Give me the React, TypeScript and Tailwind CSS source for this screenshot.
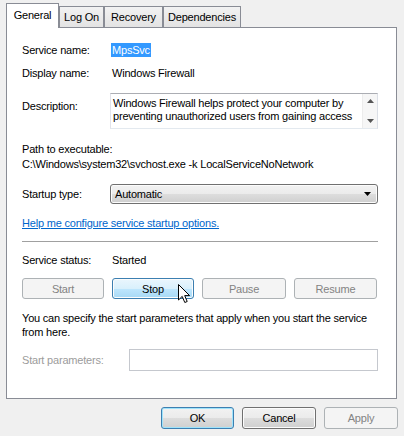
import React from 'react';

type BtnKind = 'normal' | 'disabled' | 'hover' | 'default';

const btnStyles: Record<BtnKind, string> = {
  normal:
    'border-[#707070] bg-[linear-gradient(#f2f2f2_0%,#ebebeb_50%,#dddddd_51%,#cfcfcf_100%)] text-black shadow-[inset_0_0_0_1px_#fcfcfc]',
  disabled: 'border-[#adb2b5] bg-[#f4f4f4] text-[#838383]',
  hover:
    'border-[#3c7fb1] bg-[linear-gradient(#eaf6fd_0%,#d9f0fc_50%,#bee6fd_51%,#a7d9f5_100%)] text-black shadow-[inset_0_0_0_1px_#fcfcfc]',
  default:
    'border-[#3c7fb1] bg-[linear-gradient(#f2f2f2_0%,#ebebeb_50%,#dddddd_51%,#cfcfcf_100%)] text-black shadow-[inset_0_0_0_1px_#9fe3fb]',
};

const WinButton = ({ label, kind = 'normal', className = '' }: { label: string; kind?: BtnKind; className?: string }) => (
  <div className={`flex items-center justify-center border rounded-[3px] ${btnStyles[kind]} ${className}`}>
    {label}
  </div>
);

const Tab = ({ label, active, className }: { label: string; active?: boolean; className: string }) => (
  <div
    className={
      active
        ? `h-[25px] -mb-px z-10 bg-white border border-b-0 border-[#898c95] flex items-center justify-center pb-[3px] ${className}`
        : `h-[21px] bg-[linear-gradient(#f2f2f2,#e3e3e3)] border border-b-0 border-[#898c95] flex items-center justify-center ${className}`
    }
  >
    {label}
  </div>
);

// Arrow pointer sitting over the Stop button
const Cursor = () => (
  <svg width="13" height="20" viewBox="0 0 13 20" className="absolute left-[178px] top-[284px]">
    <path d="M0.5 0.5 L0.5 16 L4.2 12.4 L6.8 18.5 L9.2 17.5 L6.7 11.6 L11.6 11.6 Z" fill="#fff" stroke="#000" strokeWidth="1" strokeLinejoin="round" />
  </svg>
);

export default function App() {
  return (
    <div className="relative w-[404px] h-[436px] bg-[#f0f0f0] font-['Liberation_Sans',Arial,sans-serif] text-[11px] tracking-[-0.2px] text-black leading-[14px] overflow-hidden">
      {/* Tabs */}
      <div className="flex items-end pl-[6px] pt-[3px]">
        <Tab label="General" active className="w-[53px]" />
        <Tab label="Log On" className="w-[45px]" />
        <Tab label="Recovery" className="w-[59px]" />
        <Tab label="Dependencies" className="w-[78px]" />
      </div>

      {/* Tab page */}
      <div className="ml-[6px] w-[391px] h-[372px] border border-[#898c95] bg-white pl-[15px] pr-[18px]">
        <div className="flex h-[14px] mt-[15px] items-center">
          <div className="w-[89px]">Service name:</div>
          <span className="bg-[#3399ff] text-white px-[1px] h-[14px]">MpsSvc</span>
        </div>

        <div className="flex h-[14px] mt-[9px] items-center">
          <div className="w-[90px]">Display name:</div>
          <span>Windows Firewall</span>
        </div>

        <div className="flex mt-[13px]">
          <div className="w-[88px] pt-[6px]">Description:</div>
          <div className="flex-1 h-[36px] border border-[#abadb3] border-l-[#e2e3ea] border-r-[#dbdfe6] border-b-[#e3e9ef] flex">
            <div className="flex-1 pl-[2px] pt-[3px] leading-[13px] overflow-hidden whitespace-nowrap">
              Windows Firewall helps protect your computer by
              <br />
              preventing unauthorized users from gaining access
            </div>
            <div className="w-[15px] bg-[#f6f6f6] border-l border-[#ececec] flex flex-col items-center justify-between py-[5px]">
              <svg width="7" height="4" viewBox="0 0 7 4">
                <path d="M0 4 L3.5 0 L7 4 Z" fill="#555" />
              </svg>
              <svg width="7" height="4" viewBox="0 0 7 4">
                <path d="M0 0 L7 0 L3.5 4 Z" fill="#555" />
              </svg>
            </div>
          </div>
        </div>

        <div className="h-[14px] mt-[13px]">Path to executable:</div>
        <div className="h-[14px] mt-[1px] whitespace-nowrap">C:\Windows\system32\svchost.exe -k LocalServiceNoNetwork</div>

        <div className="flex items-center mt-[13px]">
          <div className="w-[88px]">Startup type:</div>
          <div className="flex-1 h-[20px] border border-[#707070] rounded-[3px] bg-[linear-gradient(#f2f2f2_0%,#ebebeb_50%,#dddddd_51%,#cfcfcf_100%)] shadow-[inset_0_0_0_1px_#fcfcfc] flex items-center pl-[4px] pr-[6px]">
            <span className="flex-1">Automatic</span>
            <svg width="7" height="4" viewBox="0 0 7 4">
              <path d="M0 0 L7 0 L3.5 4 Z" fill="#000" />
            </svg>
          </div>
        </div>

        <div className="h-[14px] mt-[12px] text-[#0066cc] underline">Help me configure service startup options.</div>

        <div className="mt-[11px] border-t border-[#a0a0a0]" />

        <div className="flex h-[14px] mt-[11px] items-center">
          <div className="w-[90px]">Service status:</div>
          <span>Started</span>
        </div>

        <div className="grid grid-cols-[82px_82px_84px_83px] gap-[8px] mt-[11px] h-[21px]">
          <WinButton label="Start" kind="disabled" />
          <WinButton label="Stop" kind="hover" />
          <WinButton label="Pause" kind="disabled" />
          <WinButton label="Resume" kind="disabled" />
        </div>

        <div className="mt-[12px] whitespace-nowrap">
          You can specify the start parameters that apply when you start the service
          <br />
          from here.
        </div>

        <div className="flex items-center mt-[10px]">
          <div className="w-[107px] text-[#9c9c9c]">Start parameters:</div>
          <div className="flex-1 h-[22px] border border-[#c5c8ce] bg-white" />
        </div>
      </div>

      {/* Dialog buttons */}
      <div className="flex justify-end gap-[8px] pr-[6px] mt-[8px]">
        <WinButton label="OK" kind="default" className="w-[73px] h-[22px]" />
        <WinButton label="Cancel" className="w-[74px] h-[22px]" />
        <WinButton label="Apply" kind="disabled" className="w-[74px] h-[22px]" />
      </div>

      <Cursor />
    </div>
  );
}
